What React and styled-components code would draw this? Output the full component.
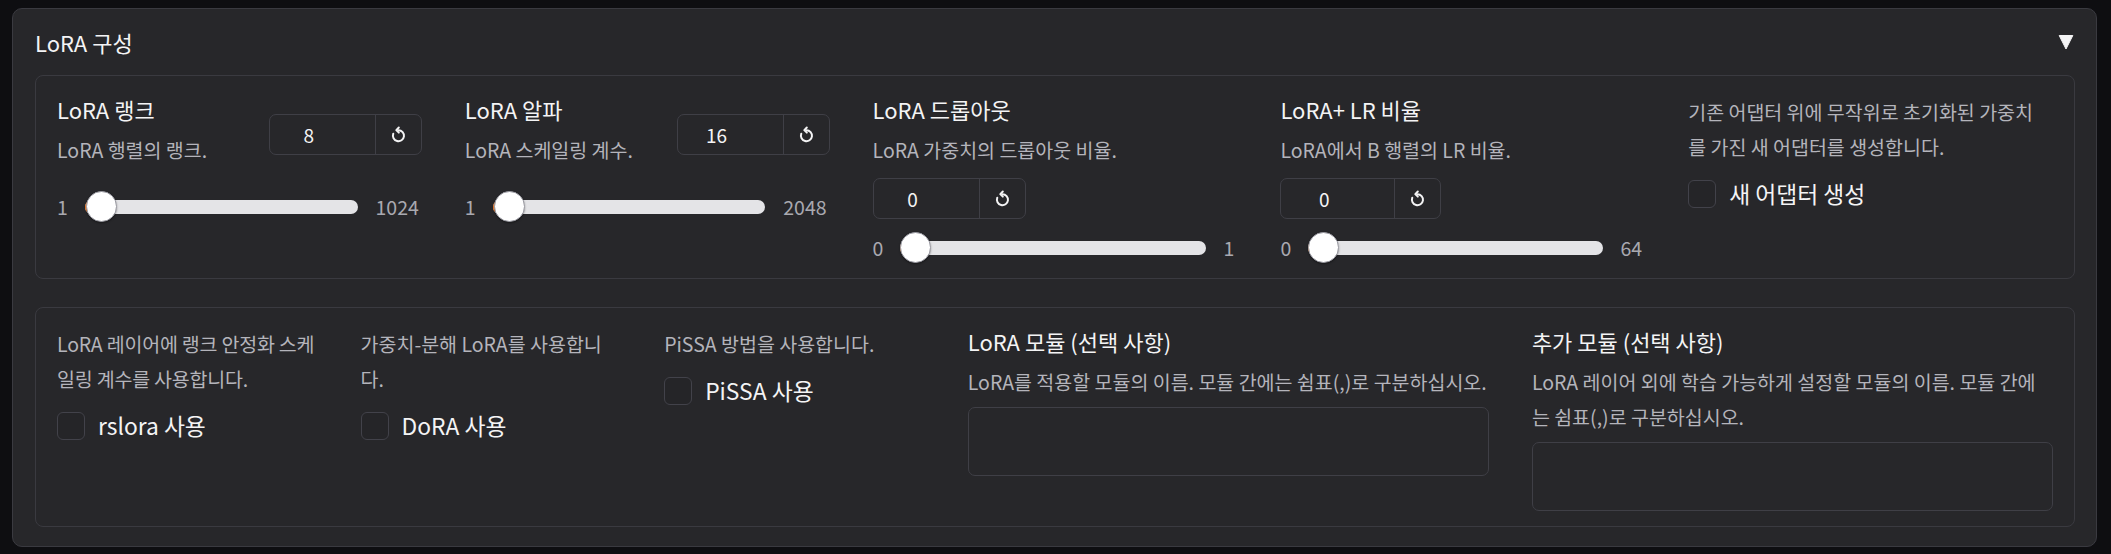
import React from "react";
import styled, { createGlobalStyle } from "styled-components";

const GlobalStyle = createGlobalStyle`
  html, body {
    margin: 0;
    padding: 0;
    background: #0e0e11;
  }
  body {
    font-family: "Noto Sans CJK KR", "Noto Sans", sans-serif;
    color: #f4f4f5;
  }
  * {
    box-sizing: border-box;
  }
`;

const Page = styled.div`
  padding: 8px 14px 6px 12px;
`;

const Panel = styled.section`
  background: #27272a;
  border: 1px solid #3a3a40;
  border-radius: 10px;
  padding: 18px 21px 19px 22px;
  display: flex;
  flex-direction: column;
  gap: 28px;
`;

const Header = styled.div`
  height: 30px;
  display: flex;
  align-items: center;
  justify-content: space-between;
  margin-bottom: -10px;
`;

const Title = styled.div`
  font-size: 22px;
  line-height: 30px;
  color: #f4f4f5;
`;

const Caret = styled.svg`
  width: 16px;
  height: 16px;
  margin-right: 1px;
`;

const Group = styled.div`
  border: 1px solid #3a3a40;
  border-radius: 8px;
  padding: 18px 21px 15px 21px;
  display: flex;
  gap: 43px;
`;

const Col = styled.div`
  flex: ${(p) => p.$grow || 1};
  min-width: 0;
  display: flex;
  flex-direction: column;
`;

const Label = styled.div`
  font-size: 22px;
  line-height: 30px;
  color: #f4f4f5;
  white-space: nowrap;
`;

const Info = styled.div`
  font-size: 19.5px;
  line-height: 35px;
  color: #b4b4bb;
  margin-top: ${(p) => (p.$first ? "0" : "8px")};
  padding-right: ${(p) => p.$inset || 0}px;
  letter-spacing: ${(p) => p.$track || 0}px;
`;

const SliderHead = styled.div`
  display: flex;
  justify-content: space-between;
  align-items: flex-start;
`;

const NumberGroup = styled.div`
  display: flex;
  height: 41px;
  border: 1px solid #3f3f46;
  border-radius: 7px;
  margin-top: ${(p) => (p.$stacked ? "11px" : "20px")};
  align-self: flex-start;
  flex-shrink: 0;
`;

const NumberField = styled.div`
  width: ${(p) => p.$width}px;
  padding: 0 27px 0 0;
  display: flex;
  align-items: center;
  justify-content: center;
  font-size: 19px;
  color: #f4f4f5;
`;

const ResetButton = styled.div`
  width: 46px;
  border-left: 1px solid #3f3f46;
  display: flex;
  align-items: center;
  justify-content: center;
  color: #f4f4f5;
`;

const SliderRow = styled.div`
  display: flex;
  align-items: center;
  height: 31px;
  margin-top: ${(p) => (p.$stacked ? "13px" : "24px")};
`;

const RangeText = styled.span`
  font-size: 19.5px;
  color: #a9a9b0;
  line-height: 1;
  margin: ${(p) => (p.$end ? "0 3px 0 18px" : "0 17px 0 0")};
`;

const Track = styled.div`
  position: relative;
  flex: 1;
  height: 14px;
  border-radius: 7px;
  background: #e4e4e7;
`;

const Fill = styled.div`
  height: 100%;
  border-radius: 7px 0 0 7px;
  background: #f97316;
`;

const Thumb = styled.div`
  position: absolute;
  top: 50%;
  width: 31px;
  height: 31px;
  margin-top: -15.5px;
  border-radius: 50%;
  background: #ffffff;
  border: 1px solid #9a9aa2;
  box-shadow: 0 1px 2px rgba(0, 0, 0, 0.35);
`;

const CheckRow = styled.label`
  display: flex;
  align-items: center;
  gap: 13px;
  margin-top: 13px;
`;

const CheckBox = styled.span`
  width: 28px;
  height: 28px;
  border: 1px solid #42424a;
  border-radius: 6px;
  background: #252528;
  flex-shrink: 0;
`;

const CheckText = styled.span`
  font-size: 22.8px;
  color: #f4f4f5;
`;

const TextBox = styled.textarea`
  display: block;
  width: 100%;
  height: 69px;
  margin-top: 8px;
  resize: none;
  background: #27272a;
  border: 1px solid #3f3f46;
  border-radius: 7px;
  outline: none;
  color: #f4f4f5;
`;

function ResetIcon() {
  return (
    <svg width="19" height="19" viewBox="0 0 24 24" fill="none" stroke="currentColor" strokeWidth="2.5" strokeLinecap="round" strokeLinejoin="round">
      <path d="M12 6.5 A7 7 0 1 1 5.4 11" />
      <path d="M12.4 3.2 L9.2 6.5 L12.4 9.6" />
    </svg>
  );
}

function SliderField({ label, info, value, min, max, stacked, fieldWidth = 105 }) {
  const f = (value - min) / (max - min);
  const number = (
    <NumberGroup $stacked={stacked}>
      <NumberField $width={fieldWidth}>{value}</NumberField>
      <ResetButton>
        <ResetIcon />
      </ResetButton>
    </NumberGroup>
  );
  return (
    <Col>
      {stacked ? (
        <>
          <Label>{label}</Label>
          <Info>{info}</Info>
          {number}
        </>
      ) : (
        <SliderHead>
          <div>
            <Label>{label}</Label>
            <Info>{info}</Info>
          </div>
          {number}
        </SliderHead>
      )}
      <SliderRow $stacked={stacked}>
        <RangeText>{min}</RangeText>
        <Track>
          <Fill style={{ width: `calc(${f * 100}% + ${(0.5 - f) * 31}px)` }} />
          <Thumb style={{ left: `calc(${f * 100}% - ${f * 31}px)` }} />
        </Track>
        <RangeText $end>{max}</RangeText>
      </SliderRow>
    </Col>
  );
}

function CheckField({ info, label, grow, inset, track }) {
  return (
    <Col $grow={grow}>
      <Info $first $inset={inset} $track={track}>{info}</Info>
      <CheckRow>
        <CheckBox />
        <CheckText>{label}</CheckText>
      </CheckRow>
    </Col>
  );
}

function TextField({ label, info, grow }) {
  return (
    <Col $grow={grow}>
      <Label>{label}</Label>
      <Info>{info}</Info>
      <TextBox rows={2} />
    </Col>
  );
}

export default function App() {
  return (
    <Page>
      <GlobalStyle />
      <Panel>
        <Header>
          <Title>LoRA 구성</Title>
          <Caret viewBox="0 0 16 16">
            <path d="M1.2 1.5 H14.8 L8 15 Z" fill="#f4f4f5" stroke="#f4f4f5" strokeWidth="1" strokeLinejoin="round" />
          </Caret>
        </Header>
        <Group>
          <SliderField label="LoRA 랭크" info="LoRA 행렬의 랭크." value={8} min={1} max={1024} />
          <SliderField label="LoRA 알파" info="LoRA 스케일링 계수." value={16} min={1} max={2048} />
          <SliderField label="LoRA 드롭아웃" info="LoRA 가중치의 드롭아웃 비율." value={0} min={0} max={1} stacked />
          <SliderField label="LoRA+ LR 비율" info="LoRA에서 B 행렬의 LR 비율." value={0} min={0} max={64} stacked fieldWidth={113} />
          <CheckField info="기존 어댑터 위에 무작위로 초기화된 가중치를 가진 새 어댑터를 생성합니다." label="새 어댑터 생성" inset={6} />
        </Group>
        <Group>
          <CheckField info="LoRA 레이어에 랭크 안정화 스케일링 계수를 사용합니다." label="rslora 사용" track={-0.2} />
          <CheckField info="가중치-분해 LoRA를 사용합니다." label="DoRA 사용" />
          <CheckField info="PiSSA 방법을 사용합니다." label="PiSSA 사용" />
          <TextField grow={2} label="LoRA 모듈 (선택 사항)" info="LoRA를 적용할 모듈의 이름. 모듈 간에는 쉼표(,)로 구분하십시오." />
          <TextField grow={2} label="추가 모듈 (선택 사항)" info="LoRA 레이어 외에 학습 가능하게 설정할 모듈의 이름. 모듈 간에는 쉼표(,)로 구분하십시오." />
        </Group>
      </Panel>
    </Page>
  );
}
